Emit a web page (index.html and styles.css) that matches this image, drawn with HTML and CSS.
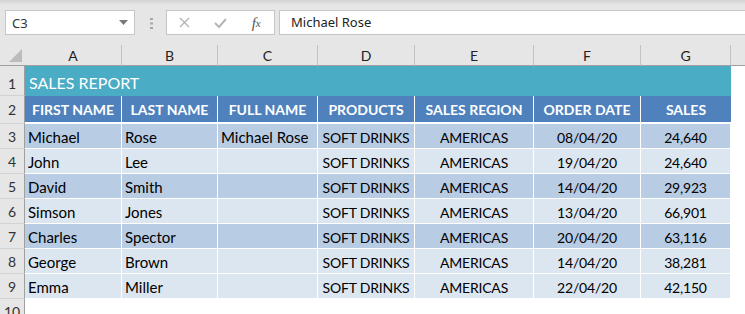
FILE: index.html
```html
<!doctype html>
<html lang="en">
<head>
  <meta charset="utf-8" />
  <title>Sales Report</title>
  <link rel="stylesheet" href="styles.css">
</head>
<body>
<div class="bar">
  <div class="namebox">
    <span>C3</span>
    <svg width="9" height="5" viewBox="0 0 9 5"><path d="M0 0h9L4.5 5z" fill="#7a7a7a"/></svg>
  </div>
  <svg class="grip" width="3" height="11" viewBox="0 0 3 11">
    <rect x="0" y="0" width="3" height="2" fill="#a6a6a6"/>
    <rect x="0" y="4.5" width="3" height="2" fill="#a6a6a6"/>
    <rect x="0" y="9" width="3" height="2" fill="#a6a6a6"/>
  </svg>
  <div class="fbtns">
    <span class="slot"><svg width="11" height="11" viewBox="0 0 11 11"><path d="M1 1l9 9M10 1l-9 9" stroke="#b5b5b5" stroke-width="1.4" fill="none"/></svg></span>
    <span class="slot"><svg width="13" height="10" viewBox="0 0 13 10"><path d="M1 5l4 4 7-8" stroke="#b5b5b5" stroke-width="2" fill="none"/></svg></span>
    <span class="slot fx">f<small>x</small></span>
  </div>
  <div class="finput">Michael Rose</div>
</div>

<div class="sheet">
  <div class="corner"><svg width="13" height="13" viewBox="0 0 13 13"><path d="M13 0v13H0z" fill="#bcbcbc"/></svg></div>
  <div class="ch">A</div><div class="ch">B</div><div class="ch">C</div><div class="ch">D</div>
  <div class="ch">E</div><div class="ch">F</div><div class="ch">G</div><div class="ch last"></div>

  <div class="row r1">
    <div class="rh">1</div>
    <div class="title">SALES REPORT</div>
    <div class="blank"></div>
  </div>

  <div class="row r2">
    <div class="rh">2</div>
    <div class="hd">FIRST NAME</div><div class="hd">LAST NAME</div><div class="hd">FULL NAME</div>
    <div class="hd">PRODUCTS</div><div class="hd">SALES REGION</div><div class="hd">ORDER DATE</div>
    <div class="hd">SALES</div><div class="blank"></div>
  </div>

  <div class="row dk">
    <div class="rh">3</div>
    <div class="c">Michael</div><div class="c">Rose</div><div class="c">Michael Rose</div>
    <div class="c ctr">SOFT DRINKS</div><div class="c ctr">AMERICAS</div><div class="c ctr">08/04/20</div>
    <div class="c ctr">24,640</div><div class="blank"></div>
  </div>
  <div class="row lt">
    <div class="rh">4</div>
    <div class="c">John</div><div class="c">Lee</div><div class="c"></div>
    <div class="c ctr">SOFT DRINKS</div><div class="c ctr">AMERICAS</div><div class="c ctr">19/04/20</div>
    <div class="c ctr">24,640</div><div class="blank"></div>
  </div>
  <div class="row dk">
    <div class="rh">5</div>
    <div class="c">David</div><div class="c">Smith</div><div class="c"></div>
    <div class="c ctr">SOFT DRINKS</div><div class="c ctr">AMERICAS</div><div class="c ctr">14/04/20</div>
    <div class="c ctr">29,923</div><div class="blank"></div>
  </div>
  <div class="row lt">
    <div class="rh">6</div>
    <div class="c">Simson</div><div class="c">Jones</div><div class="c"></div>
    <div class="c ctr">SOFT DRINKS</div><div class="c ctr">AMERICAS</div><div class="c ctr">13/04/20</div>
    <div class="c ctr">66,901</div><div class="blank"></div>
  </div>
  <div class="row dk">
    <div class="rh">7</div>
    <div class="c">Charles</div><div class="c">Spector</div><div class="c"></div>
    <div class="c ctr">SOFT DRINKS</div><div class="c ctr">AMERICAS</div><div class="c ctr">20/04/20</div>
    <div class="c ctr">63,116</div><div class="blank"></div>
  </div>
  <div class="row lt">
    <div class="rh">8</div>
    <div class="c">George</div><div class="c">Brown</div><div class="c"></div>
    <div class="c ctr">SOFT DRINKS</div><div class="c ctr">AMERICAS</div><div class="c ctr">14/04/20</div>
    <div class="c ctr">38,281</div><div class="blank"></div>
  </div>
  <div class="row lt">
    <div class="rh">9</div>
    <div class="c">Emma</div><div class="c">Miller</div><div class="c"></div>
    <div class="c ctr">SOFT DRINKS</div><div class="c ctr">AMERICAS</div><div class="c ctr">22/04/20</div>
    <div class="c ctr">42,150</div><div class="blank"></div>
  </div>

  <div class="row">
    <div class="rh">10</div>
  </div>
</div>
</body>
</html>
```

FILE: styles.css
```css
*{box-sizing:border-box}
body{
  margin:0;
  height:314px;
  overflow:hidden;
  background:#fff;
  font-family:Lato,"Liberation Sans",sans-serif;
  color:#000;
}

/* ===== formula bar ===== */
.bar{
  height:45px;
  display:flex;
  align-items:flex-start;
  padding-top:10px;
  background:linear-gradient(#d2d2d2,#e6e6e6 5px);
}
.namebox{
  margin-left:5px;
  width:130px;
  height:25px;
  background:#fff;
  border:1px solid #c6c6c6;
  display:flex;
  align-items:center;
  justify-content:space-between;
  padding:0 6px 0 6px;
  font:13px "Noto Sans",sans-serif;
  color:#333;
}
.grip{margin:8px 13px 0 15px}
.fbtns{
  width:109px;
  height:25px;
  background:#fff;
  border:1px solid #c6c6c6;
  display:flex;
}
.slot{width:36px;display:flex;align-items:center;justify-content:center}
.fx{
  font:italic 15px "Liberation Serif",serif;
  color:#555;
  padding-top:1px;
}
.fx small{font-size:11px}
.finput{
  flex:1;
  margin-left:4px;
  height:25px;
  background:#fff;
  border:1px solid #c6c6c6;
  border-right:none;
  padding-left:11px;
  font:13px "Noto Sans",sans-serif;
  line-height:23px;
  color:#222;
}

/* ===== sheet ===== */
.sheet{
  display:grid;
  grid-template-columns:25px 97px 96px 100px 97px 119px 107px 90px 1fr;
}
.row{display:contents}

.corner,.ch{
  height:21px;
  background:#e6e6e6;
  border-bottom:1px solid #a0a0a0;
}
.corner{
  display:flex;
  justify-content:flex-end;
  align-items:flex-end;
  padding:0 3px 3px 0;
}
.ch{
  border-right:1px solid #c2c2c2;
  text-align:center;
  font-size:14px;
  line-height:21px;
  color:#222;
}
.ch.last{border-right:none}

.rh{
  grid-column:1;
  background:#e6e6e6;
  border-right:1px solid #a0a0a0;
  border-bottom:1px solid #d2d2d2;
  text-align:center;
  font-size:14px;
  color:#333;
  display:flex;
  align-items:flex-end;
  justify-content:center;
  padding-bottom:3px;
  height:25px;
}

.r1 .rh{height:30px}
.title{
  grid-column:span 7;
  height:30px;
  background:#4bacc6;
  color:#fff;
  font-size:16px;
  padding:6px 0 0 4px;
  line-height:22px;
}

.r2 .rh{height:28px;padding-bottom:5px}
.hd{
  height:28px;
  background:#4f81bd;
  border-right:1px solid #fff;
  border-bottom:2px solid #fff;
  color:#fff;
  font-weight:700;
  font-size:14px;
  text-align:center;
  line-height:20px;
  padding-top:4px;
  white-space:nowrap;
}
.r2 .hd:nth-child(8){border-right:none}

.c{
  height:25px;
  border-right:1px solid #fff;
  border-bottom:1px solid #fff;
  padding:4px 3px 0;
  font-size:15px;
  line-height:18px;
  white-space:nowrap;
  overflow:hidden;
}
.c.ctr{
  text-align:center;
  font-size:14px;
  letter-spacing:-.2px;
  padding-top:5px;
}
.dk .c{background:#b8cce4}
.lt .c{background:#dce6f1}

.blank{background:#fff}
```
